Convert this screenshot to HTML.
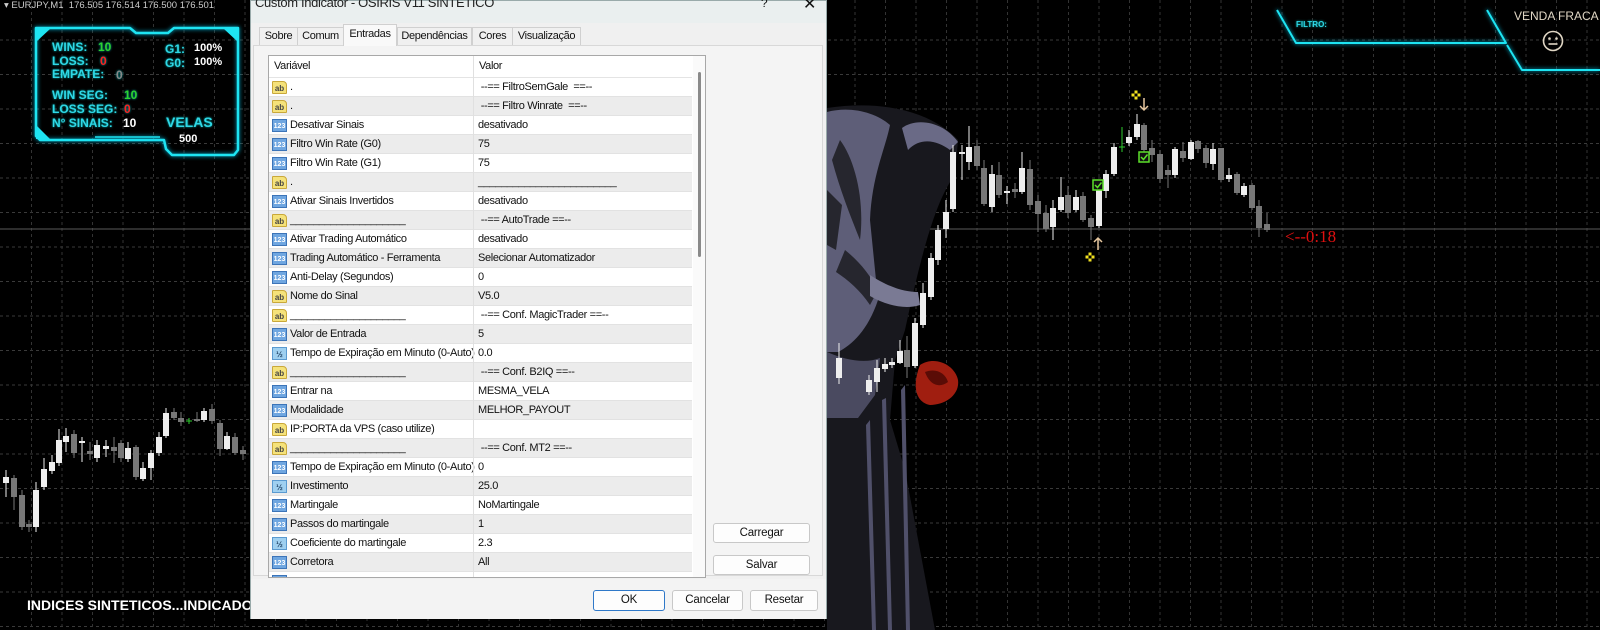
<!DOCTYPE html>
<html><head><meta charset="utf-8"><style>
*{margin:0;padding:0;box-sizing:border-box}
body{width:1600px;height:630px;background:#000;overflow:hidden;position:relative;font-family:"Liberation Sans",sans-serif}
.abs{position:absolute}
#chart{position:absolute;left:0;top:0}
.hud{position:absolute;font:bold 12px "Liberation Sans",sans-serif;color:#2fd8e6;white-space:nowrap;text-shadow:0 0 2px #0aa}
.dlg{position:absolute;left:250px;top:0;width:577px;height:619px;background:#f0f0f0;border:1px solid #9aa;font-size:11px;color:#111;letter-spacing:-.35px}
.title{position:absolute;left:0;top:0;width:100%;height:22px;background:#eaefef}
.tab{position:absolute;top:26px;height:18px;border:1px solid #d0d0d0;border-bottom:none;background:#f0f0f0;text-align:center;line-height:17px;font-size:11px}
.list{position:absolute;left:17px;top:54px;width:438px;height:523px;background:#fff;border:1px solid #a8a8a8;overflow:hidden}
.row{position:absolute;left:0;width:423px;height:19px;border-bottom:1px solid #e2e2e2;line-height:18px;white-space:nowrap}
.row.g{background:#ececec}
.row .n{position:absolute;left:21px}
.row .v{position:absolute;left:209px}
.row .c{position:absolute;left:204px;top:0;width:1px;height:19px;background:#e0e0e0}
.ic{position:absolute;left:3px;top:3px;width:15px;height:13px;font-size:8px;line-height:13px;text-align:center;font-weight:bold;letter-spacing:0}
.ab{background:#f5e27a;border:1px solid #c9a83a;color:#444;border-radius:1px 4px 1px 1px}
.nb{background:#6fa6e0;border:1px solid #3c74b8;color:#fff;font-size:7px}
.hb{background:#9fd0f0;border:1px solid #5a9ad0;color:#246;font-size:8px}
.btn{position:absolute;background:#fdfdfd;border:1px solid #c8c8c8;border-radius:3px;text-align:center;font-size:11.5px;line-height:18px;letter-spacing:-.2px}
</style></head><body>
<svg id="chart" width="1600" height="630"></svg>

<div class="abs" style="left:4px;top:0;font-size:9.5px;color:#ccc;line-height:12px;white-space:nowrap">▾ EURJPY,M1&nbsp; 176.505 176.514 176.500 176.501</div>

<div class="hud" style="left:52px;top:40px">WINS:</div><div class="hud" style="left:98px;top:40px;color:#2ed32e">10</div>
<div class="hud" style="left:52px;top:54px">LOSS:</div><div class="hud" style="left:100px;top:54px;color:#ff2020">0</div>
<div class="hud" style="left:52px;top:67px">EMPATE:</div><div class="hud" style="left:116px;top:68px;color:#888">0</div>
<div class="hud" style="left:52px;top:88px">WIN SEG:</div><div class="hud" style="left:124px;top:88px;color:#2ed32e">10</div>
<div class="hud" style="left:52px;top:102px">LOSS SEG:</div><div class="hud" style="left:124px;top:102px;color:#ff2020">0</div>
<div class="hud" style="left:52px;top:116px">N° SINAIS:</div><div class="hud" style="left:123px;top:116px;color:#fff;text-shadow:none">10</div>
<div class="hud" style="left:165px;top:42px">G1:</div><div class="hud" style="left:194px;top:42px;color:#fff;text-shadow:none;font-size:11px">100%</div>
<div class="hud" style="left:165px;top:56px">G0:</div><div class="hud" style="left:194px;top:56px;color:#fff;text-shadow:none;font-size:11px">100%</div>
<div class="hud" style="left:166px;top:114px;font-size:14px">VELAS</div>
<div class="hud" style="left:179px;top:133px;color:#fff;text-shadow:none;font-size:11px">500</div>

<div class="hud" style="left:1296px;top:20px;font-size:8px">FILTRO:</div>
<div class="abs" style="left:1514px;top:9px;font-size:12px;color:#e0d6c4;white-space:nowrap">VENDA FRACA</div>
<svg class="abs" style="left:1541px;top:29px" width="24" height="24"><circle cx="12" cy="12" r="9.5" fill="none" stroke="#e0d6c4" stroke-width="1.6"/><circle cx="8.5" cy="9.5" r="1.3" fill="#e0d6c4"/><circle cx="15.5" cy="9.5" r="1.3" fill="#e0d6c4"/><line x1="7.5" y1="15" x2="16.5" y2="15" stroke="#e0d6c4" stroke-width="1.6"/></svg>

<div class="abs" style="left:1285px;top:227px;font:17px 'Liberation Serif',serif;color:#e01010">&lt;--0:18</div>
<div class="abs" style="left:27px;top:597px;font:bold 14px 'Liberation Sans',sans-serif;color:#fff;white-space:nowrap">INDICES SINTETICOS...INDICADOR [.....]</div>

<div class="dlg">
 <div class="title"><div class="abs" style="left:4px;top:-6px;font-size:13px;color:#222;white-space:nowrap">Custom Indicator - OSIRIS V11 SINTETICO</div>
 <div class="abs" style="left:510px;top:-5px;font-size:12px">?</div><div class="abs" style="left:552px;top:-7px;font-size:16px">✕</div></div>
 <div class="abs" style="left:2px;top:44px;width:570px;height:531px;border:1px solid #d8d8d8;background:#f4f4f4"></div>
 <div class="tab" style="left:8px;width:39px">Sobre</div>
 <div class="tab" style="left:46px;width:47px">Comum</div>
 <div class="tab" style="left:92px;width:54px;top:23px;height:22px;background:#f9f9f9;z-index:2;line-height:18px">Entradas</div>
 <div class="tab" style="left:146px;width:75px">Dependências</div>
 <div class="tab" style="left:221px;width:41px">Cores</div>
 <div class="tab" style="left:261px;width:69px">Visualização</div>
 <div class="list" id="list">
  <div class="abs" style="left:0;top:0;width:423px;height:22px;border-bottom:1px solid #e4e4e4"><span class="abs" style="left:5px;top:4px">Variável</span><span class="abs" style="left:204px;top:0;width:1px;height:22px;background:#e0e0e0"></span><span class="abs" style="left:210px;top:4px">Valor</span></div>
  <div class="abs" style="left:424px;top:0;width:13px;height:523px;background:#fafafa"></div>
  <div class="abs" style="left:429px;top:16px;width:3px;height:185px;background:#8a8a8a;border-radius:2px"></div>
 </div>
 <div class="btn" style="left:462px;top:522px;width:97px;height:20px">Carregar</div>
 <div class="btn" style="left:462px;top:554px;width:97px;height:20px">Salvar</div>
 <div class="abs" style="left:0;top:578px;width:575px;height:40px;background:#f3f3f3"></div>
 <div class="btn" style="left:342px;top:589px;width:72px;height:21px;border:1px solid #2f78c8;line-height:19px">OK</div>
 <div class="btn" style="left:421px;top:589px;width:71px;height:21px;line-height:19px">Cancelar</div>
 <div class="btn" style="left:499px;top:589px;width:68px;height:21px;line-height:19px">Resetar</div>
</div>

<script>
const NS="http://www.w3.org/2000/svg",svg=document.getElementById('chart');
function el(t,a){const e=document.createElementNS(NS,t);for(const k in a)e.setAttribute(k,a[k]);svg.appendChild(e);return e}
for(let y=40;y<630;y+=34.5)el('line',{x1:0,y1:y,x2:1600,y2:y,stroke:'#3a3a3a','stroke-dasharray':'3,3'});
for(let x=31.5;x<1600;x+=30.5)el('line',{x1:x,y1:0,x2:x,y2:630,stroke:'#333','stroke-dasharray':'3,3'});
el('line',{x1:0,y1:229,x2:1600,y2:229,stroke:'#5a5a5a'});
el('path',{d:'M827 108 C880 100 930 110 958 140 L955 175 C935 200 920 260 905 330 L895 360 L890 420 L905 470 L935 630 L827 630 Z',fill:'#18181e'});
el('path',{d:'M827 112 C850 106 875 112 890 125 C885 150 872 175 870 220 L878 300 C868 330 852 345 838 352 L827 352 Z',fill:'#5e5e78'});
el('path',{d:'M902 128 C915 118 942 120 958 142 L950 150 C937 140 920 137 908 150 Z',fill:'#6a6a86'});
el('path',{d:'M840 140 C855 160 865 200 860 240 C850 215 840 190 832 160 Z M845 250 C860 262 870 275 878 290 L870 305 C860 290 848 280 836 272 Z M827 190 L842 205 L836 250 L827 245 Z',fill:'#26262e'});
el('path',{d:'M870 275 C890 288 905 292 918 292 L920 305 C905 310 885 305 870 296 Z',fill:'#7a7a94'});
el('path',{d:'M827 352 C845 360 865 364 880 358 L875 395 L858 418 L827 418 Z',fill:'#4a4a60'});
el('path',{d:'M905 385 L910 630 L906 630 L901 390 Z M886 398 L892 630 L888 630 L882 400 Z M870 420 L876 630 L872 630 L866 425 Z',fill:'#50506a'});
el('path',{d:'M920 365 C935 355 955 365 958 380 C960 395 945 405 930 405 C915 402 912 385 920 365 Z',fill:'#a01e10'});
el('path',{d:'M925 372 C935 368 945 372 948 382 C940 388 930 386 925 372 Z',fill:'#5a0c06'});
const C=[[6,477,483,1,470,497],[14,478,497,0,475,510],[22,495,527,0,490,530],[29,524,527,0,520,532],[36,490,527,1,482,532],[44,469,487,1,458,490],[52,462,471,1,455,474],[59,440,463,1,429,466],[66,436,442,1,428,452],[74,434,453,0,430,458],[82,441,443,1,437,462],[90,451,454,0,442,460],[97,445,458,1,440,462],[106,446,449,1,440,457],[114,447,451,0,437,463],[121,443,458,0,440,462],[128,448,459,1,442,462],[136,447,477,0,445,480],[143,468,479,1,462,481],[151,453,468,1,450,480],[159,437,453,1,432,456],[166,413,436,1,408,438],[174,412,418,0,408,420],[181,418,422,0,412,426],[197,419,421,0,412,422],[204,411,420,1,408,422],[212,409,421,0,404,424],[220,423,449,0,420,456],[227,436,449,1,432,450],[235,437,453,0,433,455],[243,450,454,0,446,460],
[839,358,378,1,343,384],[869,380,392,1,375,395],[877,368,382,1,360,392],[885,364,369,1,358,372],[892,362,365,1,358,368],[900,351,363,1,340,364],[907,350,367,0,336,378],[915,323,366,1,318,368],[923,293,325,1,283,328],[931,258,297,1,253,300],[938,230,260,1,225,265],[946,212,229,1,200,238],[953,152,209,1,145,212],[962,152,154,1,145,180],[969,147,162,1,126,170],[977,146,166,0,140,170],[984,168,204,0,160,206],[992,174,207,1,165,212],[999,175,195,0,162,198],[1007,191,193,1,186,204],[1015,189,192,0,183,198],[1022,168,192,1,152,194],[1030,169,205,0,160,210],[1038,201,214,0,195,232],[1046,213,229,0,205,232],[1053,208,227,1,200,240],[1061,197,210,1,177,212],[1068,195,213,0,186,218],[1076,197,210,1,190,212],[1083,196,220,0,192,222],[1091,218,227,0,215,240],[1099,190,226,1,186,228],[1106,174,191,1,170,198],[1114,147,174,1,143,176],[1129,137,143,1,130,146],[1137,124,137,1,114,140],[1144,125,150,0,123,152],[1152,148,155,0,140,162],[1160,154,179,0,150,183],[1168,170,175,0,165,188],[1175,149,175,1,147,178],[1183,151,158,0,142,162],[1191,142,159,1,140,160],[1198,141,149,0,140,153],[1206,148,163,0,145,168],[1213,149,164,1,143,170],[1221,148,180,0,148,182],[1229,175,179,1,168,182],[1237,174,193,0,172,195],[1244,186,195,1,183,197],[1252,185,208,0,183,210],[1259,206,228,0,200,237],[1267,224,230,0,213,232]];
C.forEach(c=>{const col=c[3]?'#eeeeee':'#777777';el('line',{x1:c[0],y1:c[4],x2:c[0],y2:c[5],stroke:col});el('rect',{x:c[0]-3,y:c[1],width:6,height:Math.max(2,c[2]-c[1]),fill:col})});
el('line',{x1:1122,y1:127,x2:1122,y2:152,stroke:'#2ecc2e'});el('line',{x1:1119,y1:147,x2:1125,y2:147,stroke:'#2ecc2e'});
el('line',{x1:189,y1:418,x2:189,y2:424,stroke:'#2ecc2e'});el('line',{x1:186,y1:421,x2:192,y2:421,stroke:'#2ecc2e'});
[[1098,185],[1144,157]].forEach(p=>{el('rect',{x:p[0]-5,y:p[1]-5,width:10,height:10,fill:'#111',stroke:'#5ce02a','stroke-width':1.5});el('path',{d:`M${p[0]-3} ${p[1]} l2.5 2.5 l4 -5`,stroke:'#5ce02a',fill:'none','stroke-width':1.5})});
[[1090,257],[1136,95]].forEach(p=>{[[0,-3],[-3,0],[3,0],[0,3]].forEach(d=>el('rect',{x:p[0]+d[0]-1.5,y:p[1]+d[1]-1.5,width:3,height:3,fill:'#f0e020'}))});
el('path',{d:'M1098 250 v-12 M1094 242 l4 -4 l4 4',stroke:'#e8c8a0',fill:'none','stroke-width':1.5});
el('path',{d:'M1144 98 v12 M1140 106 l4 4 l4 -4',stroke:'#e8c8a0',fill:'none','stroke-width':1.5});
const g='#1ee4f2';
function fr(d,w){el('path',{d,stroke:g,'stroke-width':w||2.5,fill:'none','stroke-linejoin':'round',style:'filter:drop-shadow(0 0 2px #0bd)'})}
fr('M36 28 L130 28 L136 33 L168 33 L174 28 L238 28 L238 150 L234 155 L172 155 L166 149 L164 140 L40 140 L36 136 Z');
fr('M95 137 L160 137',1.5);
el('path',{d:'M36 29 L50 29 L36 42 Z M224 29 L238 29 L238 42 Z M36 125 L50 139 L36 139 Z',fill:g});
fr('M1277 10 L1296 43 L1506 43 L1487 10',2);
fr('M1507 45 L1522 70 L1600 70',2);
const R=[['ab','.','&nbsp;--== FiltroSemGale&nbsp; ==--'],['ab','.','&nbsp;--== Filtro Winrate&nbsp; ==--'],['n','Desativar Sinais','desativado'],['n','Filtro Win Rate (G0)','75'],['n','Filtro Win Rate (G1)','75'],['ab','.','________________________'],['n','Ativar Sinais Invertidos','desativado'],['ab','____________________','&nbsp;--== AutoTrade ==--'],['n','Ativar Trading Automático','desativado'],['n','Trading Automático - Ferramenta','Selecionar Automatizador'],['n','Anti-Delay (Segundos)','0'],['ab','Nome do Sinal','V5.0'],['ab','____________________','&nbsp;--== Conf. MagicTrader ==--'],['n','Valor de Entrada','5'],['h','Tempo de Expiração em Minuto (0-Auto)','0.0'],['ab','____________________','&nbsp;--== Conf. B2IQ ==--'],['n','Entrar na','MESMA_VELA'],['n','Modalidade','MELHOR_PAYOUT'],['ab','IP:PORTA da VPS (caso utilize)',''],['ab','____________________','&nbsp;--== Conf. MT2 ==--'],['n','Tempo de Expiração em Minuto (0-Auto)','0'],['h','Investimento','25.0'],['n','Martingale','NoMartingale'],['n','Passos do martingale','1'],['h','Coeficiente do martingale','2.3'],['n','Corretora','All'],['n','','']];
const L=document.getElementById('list');let h='';
R.forEach((r,i)=>{const ic=r[0]=='ab'?'<div class="ic ab">ab</div>':r[0]=='h'?'<div class="ic hb">½</div>':'<div class="ic nb">123</div>';
h+=`<div class="row${i%2?' g':''}" style="top:${22+i*19}px">${ic}<span class="n">${r[1]}</span><span class="c"></span><span class="v">${r[2]}</span></div>`});
L.insertAdjacentHTML('afterbegin',h);
</script>
</body></html>
